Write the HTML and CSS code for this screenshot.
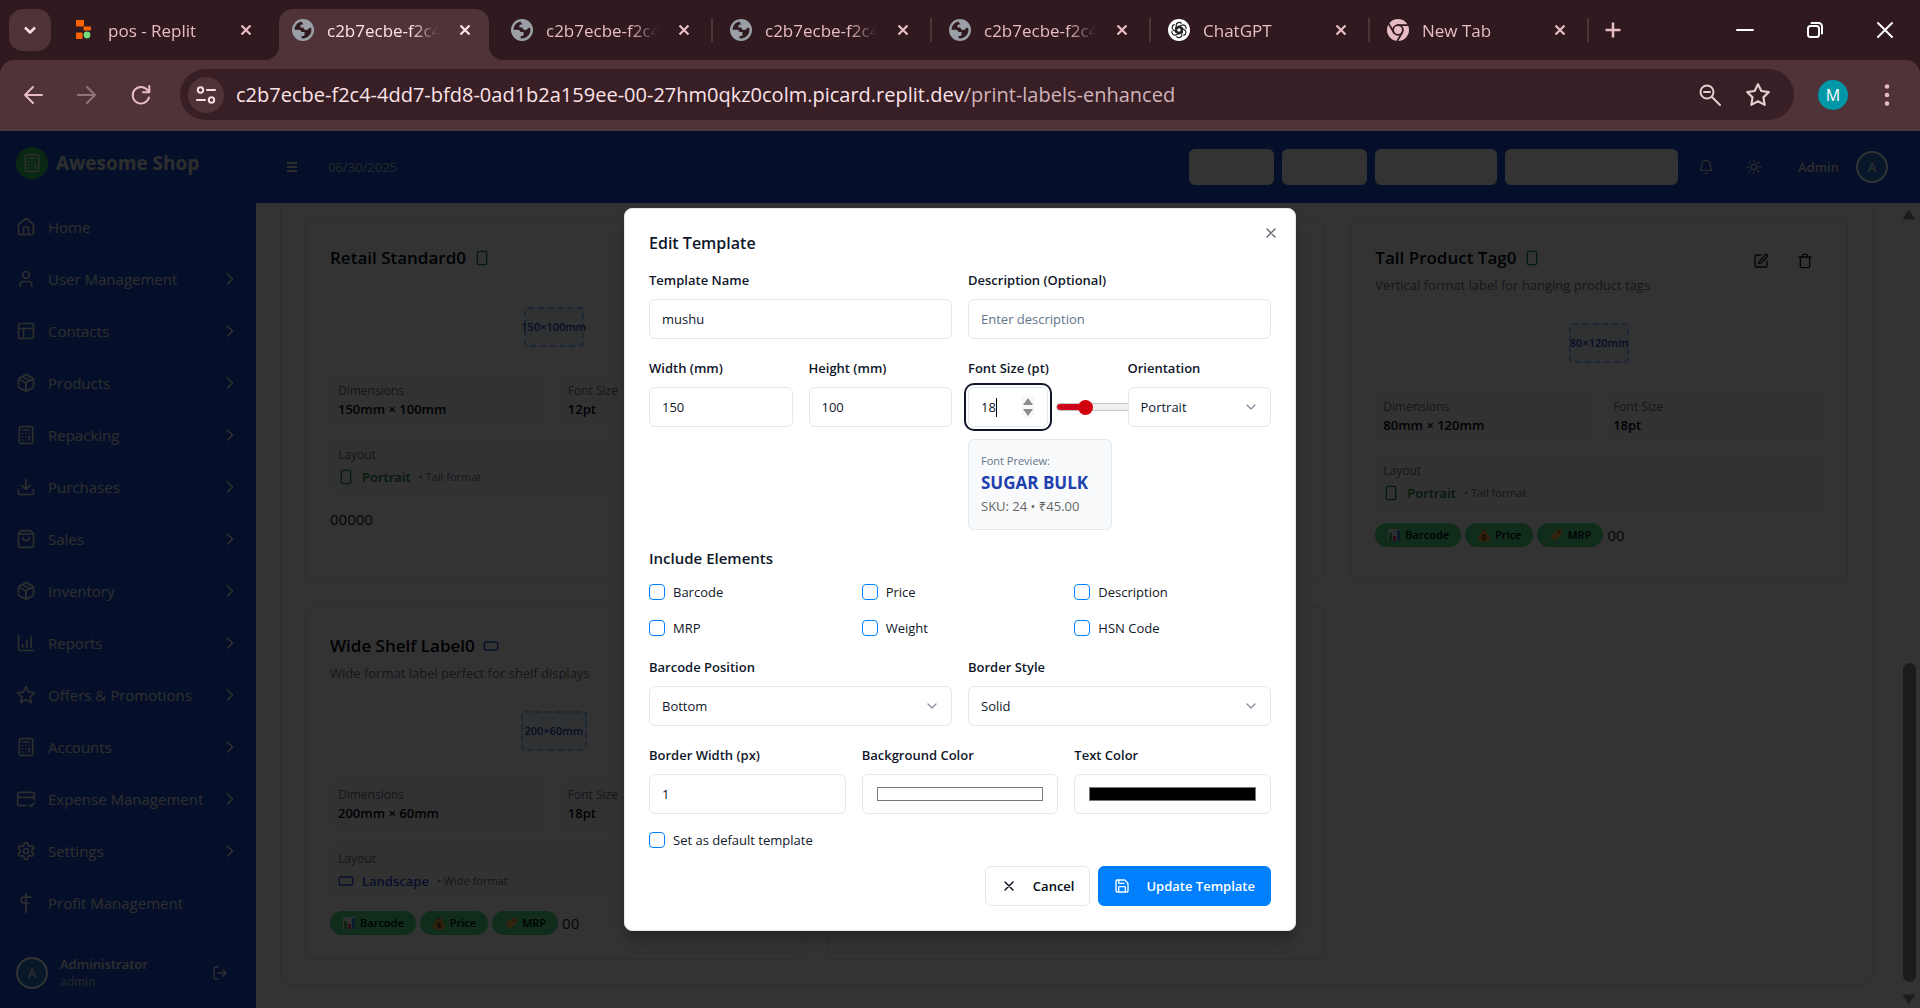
FILE: index.html
```
<!DOCTYPE html>
<html lang="en">
<head>
<meta charset="utf-8">
<meta name="viewport" content="width=device-width, initial-scale=1">
<title>Edit Template - Awesome Shop</title>
<link rel="stylesheet" href="styles.css">
</head>
<body>
<svg class="sprite" aria-hidden="true">
  <symbol id="x" viewBox="0 0 24 24"><path d="M18 6 6 18M6 6l12 12"/></symbol>
  <symbol id="chev-r" viewBox="0 0 24 24"><path d="m9 18 6-6-6-6"/></symbol>
  <symbol id="chev-d" viewBox="0 0 24 24"><path d="m6 9 6 6 6-6"/></symbol>
  <symbol id="globe" viewBox="0 0 22 22"><circle cx="11" cy="11" r="11" fill="#9aa0a6" stroke="none"/><path fill="#30191f" stroke="none" d="M9.500 2.600c-3.800.8-6.900 4-6.900 8.200h4.200c1.500 0 2.500.9 2.500 2.300h3.200v2.400c0 .9-.7 1.600-1.600 1.600H9.600v2.200c4.800.8 9.800-2.800 9.800-8.300 0-.8-.1-1.500-.3-2.200l-2 .2c-.5 1.400-1.600 2-3 1.900-1.700-.1-2.600-1-2.600-2.500H8.400V6.900c0-.8.600-1.300 1.300-1.400l2-.2c-1-.7-1.900-1.600-2.200-2.700z"/></symbol>
  <symbol id="home" viewBox="0 0 24 24"><path d="M15 21v-8a1 1 0 0 0-1-1h-4a1 1 0 0 0-1 1v8"/><path d="M3 10a2 2 0 0 1 .7-1.500l7-6a2 2 0 0 1 2.600 0l7 6A2 2 0 0 1 21 10v9a2 2 0 0 1-2 2H5a2 2 0 0 1-2-2z"/></symbol>
  <symbol id="user" viewBox="0 0 24 24"><path d="M19 21v-2a4 4 0 0 0-4-4H9a4 4 0 0 0-4 4v2"/><circle cx="12" cy="7" r="4"/></symbol>
  <symbol id="layout" viewBox="0 0 24 24"><rect x="3" y="3" width="18" height="18" rx="2"/><path d="M3 9h18M9 21V9"/></symbol>
  <symbol id="box" viewBox="0 0 24 24"><path d="M11 21.700a2 2 0 0 0 2 0l7-4A2 2 0 0 0 21 16V8a2 2 0 0 0-1-1.700l-7-4a2 2 0 0 0-2 0l-7 4A2 2 0 0 0 3 8v8a2 2 0 0 0 1 1.700zM12 22V12M3.300 7 12 12l8.700-5M7.500 4.300l9 5.100"/></symbol>
  <symbol id="calc" viewBox="0 0 24 24"><rect x="4" y="2" width="16" height="20" rx="2"/><path d="M8 6h8M16 14v4M16 10h.01M12 10h.01M8 10h.01M12 14h.01M8 14h.01M12 18h.01M8 18h.01"/></symbol>
  <symbol id="download" viewBox="0 0 24 24"><path d="M21 15v4a2 2 0 0 1-2 2H5a2 2 0 0 1-2-2v-4M7 10l5 5 5-5M12 15V3"/></symbol>
  <symbol id="bag" viewBox="0 0 24 24"><path d="M6 2 3 6v14a2 2 0 0 0 2 2h14a2 2 0 0 0 2-2V6l-3-4zM3 6h18M16 10a4 4 0 0 1-8 0"/></symbol>
  <symbol id="chart" viewBox="0 0 24 24"><path d="M3 3v16a2 2 0 0 0 2 2h16M18 17V5M13 17V9M8 17v-3"/></symbol>
  <symbol id="star" viewBox="0 0 24 24"><path d="m12 2 3.100 6.300 6.900 1-5 4.900 1.200 6.900-6.200-3.300-6.200 3.300L7 14.200 2 9.300l6.900-1z"/></symbol>
  <symbol id="card" viewBox="0 0 24 24"><path d="M22 13V6a2 2 0 0 0-2-2H4a2 2 0 0 0-2 2v12a2 2 0 0 0 2 2h8M2 10h20M16 19l2 2 4-4"/></symbol>
  <symbol id="gear" viewBox="0 0 24 24"><path d="M12.220 2h-.44a2 2 0 0 0-2 2v.18a2 2 0 0 1-1 1.730l-.43.25a2 2 0 0 1-2 0l-.15-.08a2 2 0 0 0-2.730.73l-.22.38a2 2 0 0 0 .73 2.730l.15.1a2 2 0 0 1 1 1.720v.51a2 2 0 0 1-1 1.740l-.15.09a2 2 0 0 0-.73 2.730l.22.38a2 2 0 0 0 2.730.73l.15-.08a2 2 0 0 1 2 0l.43.25a2 2 0 0 1 1 1.730V20a2 2 0 0 0 2 2h.44a2 2 0 0 0 2-2v-.18a2 2 0 0 1 1-1.730l.43-.25a2 2 0 0 1 2 0l.15.08a2 2 0 0 0 2.730-.73l.22-.39a2 2 0 0 0-.73-2.730l-.15-.08a2 2 0 0 1-1-1.740v-.5a2 2 0 0 1 1-1.740l.15-.09a2 2 0 0 0 .73-2.730l-.22-.38a2 2 0 0 0-2.730-.73l-.15.08a2 2 0 0 1-2 0l-.43-.25a2 2 0 0 1-1-1.730V4a2 2 0 0 0-2-2z"/><circle cx="12" cy="12" r="3"/></symbol>
  <symbol id="profit" viewBox="0 0 24 24"><path d="M12 1v22M18 5H9.500a3.500 3.500 0 0 0 0 7H15"/></symbol>
  <symbol id="logout" viewBox="0 0 24 24"><path d="M9 21H5a2 2 0 0 1-2-2V5a2 2 0 0 1 2-2h4M16 17l5-5-5-5M21 12H9"/></symbol>
  <symbol id="tall" viewBox="0 0 24 24"><rect x="5" y="2" width="14" height="20" rx="2"/></symbol>
  <symbol id="wide" viewBox="0 0 24 24"><rect x="2" y="6" width="20" height="12" rx="2"/></symbol>
  <symbol id="em-chart" viewBox="0 0 14 14"><rect x="1" y="1" width="12" height="12" fill="#e8edf2" stroke="none"/><path stroke="none" fill="#3fae5a" d="M2 5h3v8H2z"/><path stroke="none" fill="#e0356c" d="M6 8h3v5H6z"/><path stroke="none" fill="#3592e0" d="M10 2h3v11h-3z"/></symbol>
  <symbol id="em-money" viewBox="0 0 14 14"><path stroke="none" fill="#f4a63a" d="M5 4h4c2 2 4 4 4 6.500C13 13 10.500 13.500 7 13.500S1 13 1 10.500C1 8 3 6 5 4z"/><path stroke="none" fill="#c9772a" d="M4.500 1 7 2l2.500-1L9 4H5z"/><path d="M8.500 7.500H6.200a1 1 0 0 0 0 2h1.600a1 1 0 0 1 0 2H5.500M7 6.500v6" stroke="#5a3410" stroke-width="1"/></symbol>
  <symbol id="em-tag" viewBox="0 0 14 14"><path stroke="none" fill="#f5b13c" d="M1 8.500 8 2l4.500-.5L13 6l-7 7z"/><circle cx="10.500" cy="4" r="1.200" fill="#7a4a10" stroke="none"/></symbol>
</svg>

<header class="browser">
  <div class="tabstrip">
    <button class="tab-search" aria-label="Search tabs"><svg class="i20 thick"><use href="#chev-d"/></svg></button>
    <div class="tabs">
      <div class="tab"><svg class="fav" viewBox="0 0 22 22"><g stroke="none"><rect x="3" y="1" width="8" height="6.500" rx="1" fill="#ff6200"/><rect x="10.500" y="7.500" width="7.500" height="4" rx="1" fill="#ff6200"/><rect x="3" y="13.500" width="6.500" height="6.500" rx="1" fill="#ff6200"/><circle cx="14" cy="16" r="3.400" fill="#74dc7c"/></g></svg><span class="tab-name">pos - Replit</span><button class="tab-x" aria-label="Close tab"><svg class="i18 thick"><use href="#x"/></svg></button></div>
      <div class="tab active"><svg class="fav"><use href="#globe"/></svg><span class="tab-name">c2b7ecbe-f2c4</span><button class="tab-x" aria-label="Close tab"><svg class="i18 thick"><use href="#x"/></svg></button></div>
      <div class="tab sep"><svg class="fav"><use href="#globe"/></svg><span class="tab-name">c2b7ecbe-f2c4</span><button class="tab-x" aria-label="Close tab"><svg class="i18 thick"><use href="#x"/></svg></button></div>
      <div class="tab sep"><svg class="fav"><use href="#globe"/></svg><span class="tab-name">c2b7ecbe-f2c4</span><button class="tab-x" aria-label="Close tab"><svg class="i18 thick"><use href="#x"/></svg></button></div>
      <div class="tab sep"><svg class="fav"><use href="#globe"/></svg><span class="tab-name">c2b7ecbe-f2c4</span><button class="tab-x" aria-label="Close tab"><svg class="i18 thick"><use href="#x"/></svg></button></div>
      <div class="tab sep"><svg class="fav" viewBox="0 0 24 24"><circle cx="12" cy="12" r="12" fill="#fff" stroke="none"/><g stroke="#222" stroke-width="1.300"><path id="petal" d="M12 9.200 8.900 11v-4A3.300 3.300 0 0 1 14.500 4.600M8.900 11v3.600l3.100 1.800"/><use href="#petal" transform="rotate(60 12 12)"/><use href="#petal" transform="rotate(120 12 12)"/><use href="#petal" transform="rotate(180 12 12)"/><use href="#petal" transform="rotate(240 12 12)"/><use href="#petal" transform="rotate(300 12 12)"/></g></svg><span class="tab-name">ChatGPT</span><button class="tab-x" aria-label="Close tab"><svg class="i18 thick"><use href="#x"/></svg></button></div>
      <div class="tab sep"><svg class="fav" viewBox="0 0 22 22"><circle cx="11" cy="11" r="11" fill="#e8bcc6" stroke="none"/><circle cx="11" cy="11" r="4.900" stroke="#30191f" stroke-width="1.800"/><path d="M11 6.100h10M6.800 13.500l-5-8.600M15.200 13.500l-5 8.600" stroke="#30191f" stroke-width="1.800"/></svg><span class="tab-name">New Tab</span><button class="tab-x" aria-label="Close tab"><svg class="i18 thick"><use href="#x"/></svg></button></div>
    </div>
    <button class="new-tab" aria-label="New tab"><svg class="i20 thick" viewBox="0 0 24 24"><path d="M12 3v18M3 12h18"/></svg></button>
    <div class="win">
      <button aria-label="Minimize"><svg class="i18" viewBox="0 0 18 18"><path d="M1 9h16"/></svg></button>
      <button aria-label="Restore"><svg class="i18" viewBox="0 0 18 18"><rect x="2" y="5" width="11" height="11" rx="2.500"/><path d="M5.500 2h7A3.500 3.500 0 0 1 16 5.500v7"/></svg></button>
      <button aria-label="Close window"><svg class="i18" viewBox="0 0 18 18"><path d="m2 2 14 14M16 2 2 16"/></svg></button>
    </div>
  </div>
  <div class="toolbar">
    <button class="nav-btn" aria-label="Back"><svg class="i24" viewBox="0 0 24 24"><path d="M21 12H4M12 4l-8 8 8 8"/></svg></button>
    <button class="nav-btn off" aria-label="Forward"><svg class="i24" viewBox="0 0 24 24"><path d="M3 12h17M12 4l8 8-8 8"/></svg></button>
    <button class="nav-btn" aria-label="Reload"><svg class="i24" viewBox="0 0 24 24"><path d="M20 14.500A8.300 8.300 0 1 1 18.500 7L20 9M20.300 3v6.300H14"/></svg></button>
    <div class="omnibox">
      <button class="site-info" aria-label="Site information"><svg class="i24" viewBox="0 0 24 24"><circle cx="6.500" cy="7" r="2.700"/><path d="M13 7h8M3 17h8"/><circle cx="17.500" cy="17" r="2.700"/></svg></button>
      <span class="url">c2b7ecbe-f2c4-4dd7-bfd8-0ad1b2a159ee-00-27hm0qkz0colm.picard.replit.dev<span class="path">/print-labels-enhanced</span></span>
      <button class="omni-btn" aria-label="Zoom"><svg class="i24" viewBox="0 0 24 24"><circle cx="9" cy="9" r="6.500"/><path d="m14 14 8 8M6 9h6"/></svg></button>
      <button class="omni-btn" aria-label="Bookmark"><svg class="i26"><use href="#star"/></svg></button>
    </div>
    <button class="profile" aria-label="Profile">M</button>
    <button class="menu" aria-label="Menu"><svg class="i24" viewBox="0 0 24 24"><g fill="currentColor" stroke="none"><circle cx="12" cy="3.500" r="2.300"/><circle cx="12" cy="12" r="2.300"/><circle cx="12" cy="20.500" r="2.300"/></g></svg></button>
  </div>
</header>

<div class="app">
  <aside class="sidebar">
    <div class="brand"><span class="logo"><svg class="i20"><use href="#calc"/></svg></span><span>Awesome Shop</span></div>
    <nav class="nav">
      <a href="#"><svg class="i20"><use href="#home"/></svg><span>Home</span></a>
      <a href="#"><svg class="i20"><use href="#user"/></svg><span>User Management</span><svg class="i20"><use href="#chev-r"/></svg></a>
      <a href="#"><svg class="i20"><use href="#layout"/></svg><span>Contacts</span><svg class="i20"><use href="#chev-r"/></svg></a>
      <a href="#"><svg class="i20"><use href="#box"/></svg><span>Products</span><svg class="i20"><use href="#chev-r"/></svg></a>
      <a href="#"><svg class="i20"><use href="#calc"/></svg><span>Repacking</span><svg class="i20"><use href="#chev-r"/></svg></a>
      <a href="#"><svg class="i20"><use href="#download"/></svg><span>Purchases</span><svg class="i20"><use href="#chev-r"/></svg></a>
      <a href="#"><svg class="i20"><use href="#bag"/></svg><span>Sales</span><svg class="i20"><use href="#chev-r"/></svg></a>
      <a href="#"><svg class="i20"><use href="#box"/></svg><span>Inventory</span><svg class="i20"><use href="#chev-r"/></svg></a>
      <a href="#"><svg class="i20"><use href="#chart"/></svg><span>Reports</span><svg class="i20"><use href="#chev-r"/></svg></a>
      <a href="#"><svg class="i20"><use href="#star"/></svg><span>Offers &amp; Promotions</span><svg class="i20"><use href="#chev-r"/></svg></a>
      <a href="#"><svg class="i20"><use href="#calc"/></svg><span>Accounts</span><svg class="i20"><use href="#chev-r"/></svg></a>
      <a href="#"><svg class="i20"><use href="#card"/></svg><span>Expense Management</span><svg class="i20"><use href="#chev-r"/></svg></a>
      <a href="#"><svg class="i20"><use href="#gear"/></svg><span>Settings</span><svg class="i20"><use href="#chev-r"/></svg></a>
      <a href="#"><svg class="i20"><use href="#profit"/></svg><span>Profit Management</span></a>
    </nav>
    <div class="account">
      <span class="avatar">A</span>
      <div class="who"><strong>Administrator</strong><span>admin</span></div>
      <button class="logout" aria-label="Log out"><svg class="i16"><use href="#logout"/></svg></button>
    </div>
  </aside>

  <div class="column">
    <header class="topbar">
      <button class="icon-btn burger" aria-label="Toggle menu"><svg class="i16" viewBox="0 0 16 16"><path d="M3 4h10M3 8h10M3 12h10"/></svg></button>
      <time class="date">06/30/2025</time>
      <div class="quick">
        <button class="q1" aria-label="Quick action 1"></button>
        <button class="q1" aria-label="Quick action 2"></button>
        <button class="q2" aria-label="Quick action 3"></button>
        <button class="q3" aria-label="Quick action 4"></button>
      </div>
      <button class="icon-btn bell" aria-label="Notifications"><svg class="i16" viewBox="0 0 24 24"><path d="M10.300 21a2 2 0 0 0 3.400 0M3.300 15.300A1 1 0 0 0 4 17h16a1 1 0 0 0 .7-1.700C19.400 14 18 12.500 18 8A6 6 0 0 0 6 8c0 4.500-1.400 6-2.700 7.300z"/></svg></button>
      <button class="icon-btn sun" aria-label="Theme"><svg class="i16" viewBox="0 0 24 24"><circle cx="12" cy="12" r="4"/><path d="M12 2v2M12 20v2M4.900 4.900l1.400 1.400M17.700 17.700l1.400 1.400M2 12h2M20 12h2M6.300 17.700l-1.400 1.400M19.100 4.900l-1.400 1.400"/></svg></button>
      <strong class="role">Admin</strong>
      <span class="avatar">A</span>
    </header>

    <div class="scroller">
      <main class="main">
        <section class="panel">
          <article class="card">
            <div class="card-head"><h3>Retail Standard0 <svg class="i16 green"><use href="#tall"/></svg></h3></div>
            <div class="stage"><span class="label-box">150×100mm</span></div>
            <div class="facts">
              <div class="fact"><span>Dimensions</span><strong>150mm × 100mm</strong></div>
              <div class="fact"><span>Font Size</span><strong>12pt</strong></div>
              <div class="fact layout"><span>Layout</span><div class="orient green"><svg class="i16"><use href="#tall"/></svg><strong>Portrait</strong><small>• Tall format</small></div></div>
            </div>
            <div class="tags"><span>00000</span></div>
          </article>
          <article class="card tallest"></article>
          <article class="card">
            <div class="card-head">
              <div><h3>Tall Product Tag0 <svg class="i16 green"><use href="#tall"/></svg></h3><p>Vertical format label for hanging product tags</p></div>
              <div class="acts">
                <button aria-label="Edit"><svg class="i16" viewBox="0 0 24 24"><path d="M12 3H5a2 2 0 0 0-2 2v14a2 2 0 0 0 2 2h14a2 2 0 0 0 2-2v-7"/><path d="M18.400 2.600a2.100 2.100 0 0 1 3 3L12.400 14.600a2 2 0 0 1-.9.5l-2.800.8.800-2.800a2 2 0 0 1 .5-.9z"/></svg></button>
                <button aria-label="Delete"><svg class="i16" viewBox="0 0 24 24"><path d="M3 6h18M19 6v14a2 2 0 0 1-2 2H7a2 2 0 0 1-2-2V6M8 6V4a2 2 0 0 1 2-2h4a2 2 0 0 1 2 2v2"/></svg></button>
              </div>
            </div>
            <div class="stage"><span class="label-box">80×120mm</span></div>
            <div class="facts">
              <div class="fact"><span>Dimensions</span><strong>80mm × 120mm</strong></div>
              <div class="fact"><span>Font Size</span><strong>18pt</strong></div>
              <div class="fact layout"><span>Layout</span><div class="orient green"><svg class="i16"><use href="#tall"/></svg><strong>Portrait</strong><small>• Tall format</small></div></div>
            </div>
            <div class="tags"><b class="tag"><svg class="i14"><use href="#em-chart"/></svg>Barcode</b><b class="tag"><svg class="i14"><use href="#em-money"/></svg>Price</b><b class="tag"><svg class="i14"><use href="#em-tag"/></svg>MRP</b><span>00</span></div>
          </article>
          <article class="card">
            <div class="card-head"><div><h3>Wide Shelf Label0 <svg class="i16 blue"><use href="#wide"/></svg></h3><p>Wide format label perfect for shelf displays</p></div></div>
            <div class="stage"><span class="label-box broad">200×60mm</span></div>
            <div class="facts">
              <div class="fact"><span>Dimensions</span><strong>200mm × 60mm</strong></div>
              <div class="fact"><span>Font Size</span><strong>18pt</strong></div>
              <div class="fact layout"><span>Layout</span><div class="orient blue"><svg class="i16"><use href="#wide"/></svg><strong>Landscape</strong><small>• Wide format</small></div></div>
            </div>
            <div class="tags"><b class="tag"><svg class="i14"><use href="#em-chart"/></svg>Barcode</b><b class="tag"><svg class="i14"><use href="#em-money"/></svg>Price</b><b class="tag"><svg class="i14"><use href="#em-tag"/></svg>MRP</b><span>00</span></div>
          </article>
          <article class="card"></article>
        </section>
      </main>
      <div class="scrollbar" aria-hidden="true">
        <svg class="i16" viewBox="0 0 16 16"><path d="M8 3.500 13.500 12h-11z"/></svg>
        <span class="track"><span class="thumb"></span></span>
        <svg class="i16" viewBox="0 0 16 16"><path d="M8 12.500 13.500 4h-11z"/></svg>
      </div>
    </div>
  </div>

  <div class="overlay">
    <form class="dialog" role="dialog" aria-labelledby="dlg-title">
      <button type="button" class="dlg-close" aria-label="Close"><svg class="i16"><use href="#x"/></svg></button>
      <h2 id="dlg-title">Edit Template</h2>
      <div class="row c2">
        <div class="field"><label for="name">Template Name</label><input class="ctl" id="name" type="text" value="mushu"></div>
        <div class="field"><label for="desc">Description (Optional)</label><input class="ctl" id="desc" type="text" placeholder="Enter description"></div>
      </div>
      <div class="row c4">
        <div class="field"><label for="w">Width (mm)</label><input class="ctl" id="w" type="number" value="150"></div>
        <div class="field"><label for="h">Height (mm)</label><input class="ctl" id="h" type="number" value="100"></div>
        <div class="field">
          <label for="fs">Font Size (pt)</label>
          <div class="size-line">
            <span class="spin"><input class="ctl focused" id="fs" type="number" value="18"><i class="caret"></i><svg class="arrows" viewBox="0 0 12 22"><path d="M6 2l5 7H1zM6 20l5-7H1z"/></svg></span>
            <input class="range" type="range" min="6" max="72" value="18" aria-label="Font size slider">
          </div>
          <div class="preview"><span>Font Preview:</span><strong>SUGAR BULK</strong><em>SKU: 24 • ₹45.00</em></div>
        </div>
        <div class="field"><label for="ori">Orientation</label><span class="pick"><select class="ctl" id="ori"><option>Portrait</option><option>Landscape</option></select><svg class="i16"><use href="#chev-d"/></svg></span></div>
      </div>
      <fieldset class="elements">
        <legend>Include Elements</legend>
        <div class="checks">
          <label><input type="checkbox">Barcode</label>
          <label><input type="checkbox">Price</label>
          <label><input type="checkbox">Description</label>
          <label><input type="checkbox">MRP</label>
          <label><input type="checkbox">Weight</label>
          <label><input type="checkbox">HSN Code</label>
        </div>
      </fieldset>
      <div class="row c2">
        <div class="field"><label for="pos">Barcode Position</label><span class="pick"><select class="ctl" id="pos"><option>Bottom</option><option>Top</option></select><svg class="i16"><use href="#chev-d"/></svg></span></div>
        <div class="field"><label for="bs">Border Style</label><span class="pick"><select class="ctl" id="bs"><option>Solid</option><option>Dashed</option></select><svg class="i16"><use href="#chev-d"/></svg></span></div>
      </div>
      <div class="row c3">
        <div class="field"><label for="bw">Border Width (px)</label><input class="ctl" id="bw" type="number" value="1"></div>
        <div class="field"><label for="bg">Background Color</label><input class="ctl" id="bg" type="color" value="#ffffff"></div>
        <div class="field"><label for="tc">Text Color</label><input class="ctl" id="tc" type="color" value="#000000"></div>
      </div>
      <label class="default"><input type="checkbox">Set as default template</label>
      <div class="actions">
        <button type="button" class="btn"><svg class="i16"><use href="#x"/></svg>Cancel</button>
        <button type="submit" class="btn primary"><svg class="i16" viewBox="0 0 24 24"><path d="M15.200 3a2 2 0 0 1 1.400.6l3.800 3.800a2 2 0 0 1 .6 1.400V19a2 2 0 0 1-2 2H5a2 2 0 0 1-2-2V5a2 2 0 0 1 2-2zM17 21v-7a1 1 0 0 0-1-1H8a1 1 0 0 0-1 1v7M7 3v4a1 1 0 0 0 1 1h7"/></svg>Update Template</button>
      </div>
    </form>
  </div>
</div>
</body>
</html>
```
FILE: styles.css
```
* { box-sizing: border-box; }

body {
  margin: 0;
  min-height: 100vh;
  display: flex;
  flex-direction: column;
  font: 13px/20px "Open Sans", "Noto Sans", sans-serif;
  color: #0f172a;
  background: #fff;
}

button, input, select { font: inherit; color: inherit; }
button { background: none; border: 0; padding: 0; display: grid; place-items: center; }
a { color: inherit; text-decoration: none; }
svg { fill: none; stroke: currentColor; stroke-width: 2; stroke-linecap: round; stroke-linejoin: round; flex: none; }
.sprite { position: absolute; width: 0; height: 0; }
.i14 { width: 14px; height: 14px; }
.i16 { width: 16px; height: 16px; }
.i18 { width: 18px; height: 18px; }
.i20 { width: 20px; height: 20px; }
.i24 { width: 24px; height: 24px; }
.i26 { width: 26px; height: 26px; }
.thick { stroke-width: 3; stroke-linecap: butt; }

/* Browser frame */
.browser { background: #30191f; color: #e8bcc6; font-size: 17px; }
.tabstrip { height: 60px; display: flex; align-items: center; padding-left: 9px; }
.tab-search { width: 42px; height: 42px; border-radius: 14px; background: #4f3338; color: #f7dde2; }
.tabs { display: flex; align-self: stretch; margin-left: 4px; }
.tab { position: relative; width: 219px; height: 51px; margin-top: 9px; padding: 0 19px 9px 18px; display: flex; align-items: center; }
.fav { width: 22px; height: 22px; margin-right: 13px; }
.tab-name { flex: 1; padding-top: 2px; line-height: 24px; white-space: nowrap; overflow: hidden; mask-image: linear-gradient(90deg, #000 75%, transparent); }
.tab-x { width: 18px; height: 18px; margin-left: 17px; }
.tab.active { color: #f9e4e8; }
.tab.active::before {
  content: ""; position: absolute; z-index: 0; inset: 0 4px 0 5px;
  background: #4f3338; border-radius: 14px 14px 0 0;
}
.tab.active::after {
  content: ""; position: absolute; left: -9px; right: -10px; bottom: 0; height: 14px;
  background:
    radial-gradient(circle at 0 0, transparent 14px, #4f3338 14px) left / 14px 14px no-repeat,
    radial-gradient(circle at 14px 0, transparent 14px, #4f3338 14px) right / 14px 14px no-repeat;
}
.tab.active > * { position: relative; }
.tab.sep::after { content: ""; position: absolute; right: -1px; top: 9px; width: 2px; height: 24px; background: #4f3338; }
.new-tab { width: 44px; height: 44px; margin-left: 3px; }
.win { margin-left: auto; display: flex; color: #fff; }
.win button { width: 70px; height: 60px; }

.toolbar {
  height: 71px; display: flex; align-items: center;
  padding: 0 15px 0 6px; background: #4f3338;
  border-radius: 14px 14px 0 0; border-bottom: 2px solid #4a3c3f;
}
.nav-btn { width: 54px; height: 40px; }
.nav-btn.off { color: #93747a; }
.omnibox {
  flex: 1; min-width: 0; height: 51px; margin: 0 24px 0 12px; padding: 0 12px 0 8px;
  display: flex; align-items: center; border-radius: 26px; background: #381e25; color: #e6cdd2;
}
.site-info { width: 36px; height: 36px; border-radius: 50%; background: #4f3338; color: #f7dde2; }
.url { flex: 1; margin-left: 12px; font-size: 20px; line-height: 28px; white-space: nowrap; overflow: hidden; color: #fbe3e8; }
.path { color: #cfb4ba; }
.omni-btn { width: 48px; height: 40px; }
.profile { width: 30px; height: 30px; border-radius: 50%; background: #0097a7; color: #fff; font-size: 16px; }
.menu { width: 36px; height: 40px; margin-left: 21px; }

/* Application */
.app { position: relative; flex: 1; display: flex; }
.sidebar { width: 256px; display: flex; flex-direction: column; background: #194bcd; color: #e5e5e5; font-size: 15px; font-weight: 500; }
.brand { display: flex; align-items: center; gap: 8px; padding: 16px 16px 24px; font-size: 19px; font-weight: 700; line-height: 32px; }
.logo { display: grid; place-items: center; width: 32px; height: 32px; border-radius: 50%; background: #2fc95a; }
.nav { display: flex; flex-direction: column; padding: 0 16px; margin-top: -2px; }
.nav a { display: flex; align-items: center; gap: 12px; height: 52px; }
.nav span { flex: 1; white-space: nowrap; }
.account { display: flex; align-items: center; gap: 12px; margin-top: auto; height: 72px; padding: 0 28px 0 16px; border-top: 1px solid #1e55d8; }
.avatar { flex: none; display: grid; place-items: center; width: 32px; height: 32px; border: 2px solid #fff; border-radius: 50%; background: #2a78d0; color: #e8e8e8; font-size: 13px; font-weight: 600; }
.who { flex: 1; display: flex; flex-direction: column; line-height: 18px; font-size: 13px; }
.who strong { font-weight: 600; }
.who span { font-size: 12px; color: #c4c8d2; }

.column { flex: 1; min-width: 0; display: flex; flex-direction: column; }
.topbar { height: 72px; display: flex; align-items: center; padding: 0 32px 0 28px; background: #194bcd; color: #dcdcdc; }
.burger { stroke-width: 1; }
.burger svg { stroke-width: 2; stroke-linecap: butt; }
.date { margin-left: 28px; font-size: 13px; color: #c4c8d2; }
.quick { display: flex; gap: 8px; margin-left: auto; }
.quick button { height: 36px; border-radius: 6px; background: #fff; }
.q1 { width: 85px; }
.q2 { width: 122px; }
.q3 { width: 173px; }
.bell { margin-left: 20px; }
.sun { margin-left: 32px; }
.role { margin: 0 17px 0 36px; font-weight: 600; }

.scroller { flex: 1; display: flex; }
.main { flex: 1; min-width: 0; padding: 0 24px; background: #fcfcfd; }
.panel {
  display: grid; grid-template-columns: repeat(3, minmax(0, 1fr)); gap: 25px;
  padding: 15px 25px 24px 24px; border: 1px solid #e2e5ea; border-top: 0; border-radius: 0 0 10px 10px; background: #fff;
}
.card { padding: 24px; border: 1px solid #e0e3e8; border-radius: 8px; background: #fff; }
.tallest { min-height: 363px; }
.card-head { display: flex; align-items: flex-start; justify-content: space-between; min-height: 36px; }
.card h3 { display: flex; align-items: center; gap: 8px; margin: 0; font-size: 17px; font-weight: 600; line-height: 30px; color: #020817; }
.card p { margin: 2px 0 0; color: #64748b; line-height: 20px; }
.acts { display: flex; gap: 8px; }
.acts button { width: 36px; height: 36px; }
.green { color: #15803d; }
.card h3 svg.blue, .blue { color: #2050d8; }
.stage { display: grid; place-items: center; padding: 28px 0; }
.label-box {
  display: flex; align-items: center; justify-content: center; width: 60px; height: 40px;
  border: 2px dashed #93c5fd; border-radius: 4px; background: #f1f6ff; color: #1e40af; font-size: 11px; font-weight: 600; white-space: nowrap;
}
.broad { width: 66px; }
.facts { display: grid; grid-template-columns: 1fr 1fr; gap: 12px; }
.fact { display: flex; flex-direction: column; padding: 8px; border-radius: 6px; background: #f7f8fa; }
.fact span { font-size: 12px; line-height: 16px; color: #64748b; }
.fact strong { font-weight: 600; color: #020817; }
.fact.layout { grid-column: span 2; gap: 4px; }
.orient { display: flex; align-items: center; gap: 8px; line-height: 20px; }
.orient.green strong { color: #15803d; }
.orient.blue strong { color: #2050d8; }
.orient small { font-size: 11px; color: #64748b; }
.tags { display: flex; align-items: center; gap: 4px; height: 24px; margin-top: 12px; font-size: 15px; }
.tag { display: flex; align-items: center; gap: 4px; height: 24px; padding: 0 12px; border-radius: 12px; background: #4ade80; color: #020817; font-size: 11px; font-weight: 600; }

.scrollbar { width: 22px; display: flex; flex-direction: column; align-items: center; padding: 4px 0 1px; background: #fcfcfd; }
.scrollbar svg { fill: #8b8b8b; stroke: #8b8b8b; stroke-width: 1; }
.track { flex: 1; display: flex; align-items: flex-end; padding-bottom: 9px; }
.thumb { width: 13px; height: 42%; border-radius: 7px; background: #8b8b8b; }

/* Dialog */
.overlay { position: absolute; inset: 0; display: grid; place-items: center; background: rgba(0, 0, 0, .8); }
.dialog {
  position: relative; width: 672px; padding: 20px 24px 24px; border: 1px solid #e2e8f0; border-radius: 8px;
  background: #fff; box-shadow: 0 10px 15px -3px rgba(0, 0, 0, .3);
}
.dialog h2 { margin: 0 0 12px; font-size: 16px; font-weight: 600; line-height: 28px; }
.dlg-close { position: absolute; top: 16px; right: 16px; color: #5b6472; }
.row { display: grid; gap: 16px; margin-bottom: 16px; }
.c2 { grid-template-columns: repeat(2, minmax(0, 1fr)); margin-bottom: 18px; }
.c3 { grid-template-columns: repeat(3, minmax(0, 1fr)); }
.c4 { grid-template-columns: repeat(4, minmax(0, 1fr)); }
.field { display: flex; flex-direction: column; gap: 9px; }
.field label { font-weight: 600; line-height: 20px; padding-top: 1px; white-space: nowrap; }
.ctl {
  width: 100%; height: 40px; margin: 0; padding: 8px 12px; border: 1px solid #e2e8f0; border-radius: 6px;
  background: #fff; outline: 0; appearance: none;
}
.ctl::placeholder { color: #64748b; opacity: 1; }
.ctl[type=number] { appearance: textfield; }
.ctl::-webkit-inner-spin-button { display: none; }
.pick { position: relative; display: block; background: #fff; }
.pick svg { position: absolute; right: 12px; top: 12px; color: #8a909b; pointer-events: none; }
.size-line { display: flex; align-items: center; gap: 8px; }
.spin { position: relative; flex: none; width: 80px; }
.focused { display: block; box-shadow: 0 0 0 2px #fff, 0 0 0 4px #0f172a; }
.caret { position: absolute; left: 28px; top: 11px; width: 1px; height: 19px; background: #000; }
.arrows { position: absolute; right: 14px; top: 9px; width: 12px; height: 22px; fill: #8b8b8b; stroke: none; background: #f8f8f8; }
.range {
  flex: none; width: 130px; height: 8px; margin: 0; appearance: none; border: 1px solid #c4c4c4; border-radius: 4px;
  background: linear-gradient(90deg, #d0021b 28px, #efefef 28px);
}
.range::-webkit-slider-thumb { appearance: none; width: 15px; height: 15px; border-radius: 50%; background: #d0000f; }
.preview { display: flex; flex-direction: column; margin-top: 3px; padding: 11px 12px; border: 1px solid #e2e8f0; border-radius: 6px; background: #f8fafc; white-space: nowrap; }
.preview span { font-size: 11px; line-height: 20px; color: #64748b; }
.preview strong { font-size: 17px; line-height: 24px; color: #1e40af; }
.preview em { font-style: normal; line-height: 23px; color: #666; }
.elements { margin: 0 0 18px; padding: 0; border: 0; }
.elements legend { padding: 0; margin-bottom: 12px; font-size: 15px; font-weight: 600; line-height: 24px; }
.checks { display: grid; grid-template-columns: repeat(3, minmax(0, 1fr)); gap: 16px; }
.checks label, .default { display: flex; align-items: center; gap: 8px; }
.dialog input[type=checkbox] { appearance: none; width: 16px; height: 16px; margin: 0; border: 1px solid #0080ff; border-radius: 4px; background: #fff; }
.actions { display: flex; justify-content: flex-end; gap: 8px; margin-top: 16px; }
.btn { display: flex; align-items: center; gap: 16px; height: 40px; padding: 0 15px; border: 1px solid #e2e8f0; border-radius: 6px; font-weight: 600; color: #020817; }
.btn.primary { border-color: #0080ff; background: #0080ff; color: #fff; }
```
